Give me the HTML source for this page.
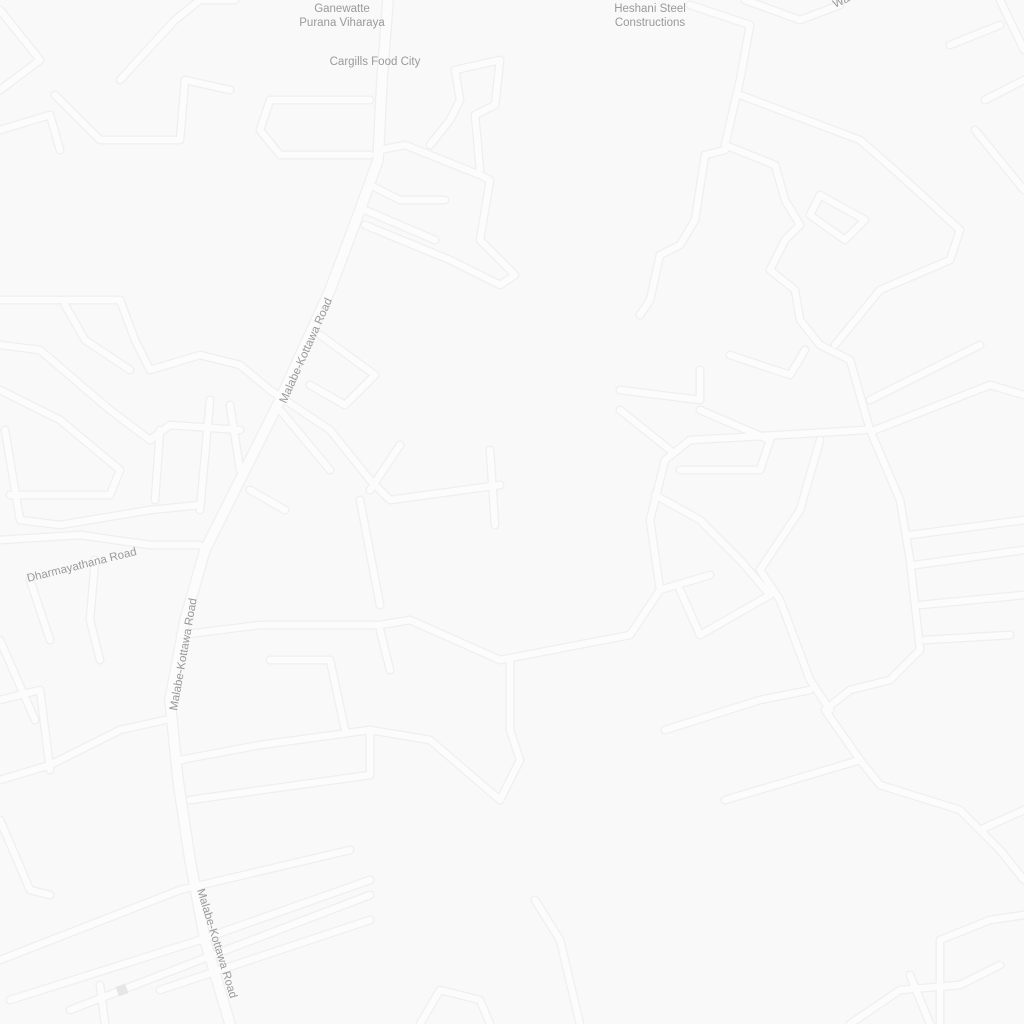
<!DOCTYPE html>
<html><head><style>
html,body{margin:0;padding:0;background:#f9f9f9;width:1024px;height:1024px;overflow:hidden}
svg{display:block}
text{font-family:"Liberation Sans",sans-serif;fill:#9a9a9a;font-size:11.5px}
</style></head><body>
<svg width="1024" height="1024" viewBox="0 0 1024 1024">
<defs>
<g id="r">
<path d="M0 300 L120 300 L135 340 L150 370 L200 355 L240 365 L270 390 L330 430 L370 480 L390 500 L500 485"/>
<path d="M0 345 L40 350 L110 410 L150 440 L170 425 L240 430"/>
<path d="M0 390 L60 420 L120 470 L110 495 L10 495"/>
<path d="M5 430 L20 520 L60 525 L150 510 L200 505"/>
<path d="M0 540 L80 535 L150 545 L200 545"/>
<path d="M30 580 L50 640 M95 560 L90 620 L100 660"/>
<path d="M65 305 L85 340 L130 370"/>
<path d="M160 430 L155 500 M210 400 L200 510 M230 405 L240 470"/>
<path d="M360 500 L380 605 M490 450 L495 525"/>
<path d="M180 635 L260 625 L380 625 L410 620 L500 660 L630 635 L660 590 L650 520 L665 460 L690 440 L780 435 L865 430"/>
<path d="M380 630 L390 670 M510 660 L510 730 L520 760 L500 800"/>
<path d="M180 760 L260 745 L370 730 L430 740 L500 800"/>
<path d="M190 800 L370 775 L370 730"/>
<path d="M270 660 L330 660 L345 730"/>
<path d="M0 780 L50 765 L120 730 L165 720"/>
<path d="M0 700 L40 690 L50 770 M0 640 L35 720"/>
<path d="M0 820 L30 890 L50 895"/>
<path d="M0 960 L180 890 L350 850 M10 1000 L200 940 L370 880 M70 1010 L200 960 L370 895 M160 990 L370 920"/>
<path d="M100 985 L105 1024"/>
<path d="M420 1024 L440 990 L480 1000 L490 1024 M535 900 L560 940 L580 1024"/>
<path d="M745 0 L800 20 L840 5 M690 5 L750 25 L740 80 L725 145 L775 165 L785 200 L800 225 L785 240 L770 270 L795 290 L800 320 L820 345 L850 360 L870 430 L900 500 L910 560 L920 650 L890 680 L850 690 L825 710 L860 760 L880 785 L960 810 L1000 850 L1024 880"/>
<path d="M740 95 L860 140 L900 175 L960 230 L950 260 L880 290 L835 345"/>
<path d="M820 195 L865 220 L845 240 L810 215Z"/>
<path d="M725 150 L705 155 L695 220 L680 245 L660 255 L650 300 L640 315"/>
<path d="M870 400 L980 345 M875 430 L990 385 L1024 395"/>
<path d="M620 390 L700 400 L700 370 M620 410 L670 450 M700 410 L770 440 L760 470 L680 470"/>
<path d="M820 440 L800 510 L760 570 L780 600 L810 680 L830 710 M655 495 L700 520 L740 560 L770 595 L700 635 L680 590 M660 590 L710 575"/>
<path d="M730 355 L790 375 L805 350"/>
<path d="M910 535 L1024 520 M915 565 L1024 550 M920 605 L1024 595 M925 640 L1010 635"/>
<path d="M665 730 L760 700 L810 690 M725 800 L860 760"/>
<path d="M850 1024 L900 990 L960 985 L1000 965 M940 1024 L940 940 L990 920 L1024 915 M980 830 L1024 810 M930 1024 L910 975"/>
<path d="M1000 0 L1024 50 M950 45 L1000 25 M985 100 L1024 80 M975 130 L1024 190"/>
<path d="M0 10 L40 60 L0 90 M0 130 L50 115 L60 150 M55 95 L100 140 L180 140 L185 80 L230 90 M120 80 L175 20 L200 0 M200 0 L235 0"/>
<path d="M370 100 L270 100 L260 130 L280 155 L370 155"/>
<path d="M380 150 L405 145 L480 175 L490 180 L480 240 L515 275 L500 285 L450 260 L365 225 M370 185 L400 200 L445 200 M365 210 L435 240"/>
<path d="M430 145 L450 120 L460 100 L455 70 L500 60 L495 105 L475 115 L480 170"/>
<path d="M280 410 L330 470 M250 490 L285 510 M370 490 L400 445 M320 335 L375 375 L345 405 L310 385"/>
</g>
<path id="m" d="M388 0 L382 80 L378 160 L360 210 L330 290 L280 400 L240 480 L205 550 L185 620 L170 700 L178 780 L190 860 L205 940 L230 1024"/>
</defs>
<rect width="1024" height="1024" fill="#f9f9f9"/>
<g fill="none" stroke-linecap="round" stroke-linejoin="round">
<use href="#r" stroke="#efefef" stroke-width="9"/>
<use href="#m" stroke="#efefef" stroke-width="12"/>
<use href="#r" stroke="#fcfcfc" stroke-width="6.5"/>
<use href="#m" stroke="#fcfcfc" stroke-width="9.5"/>
</g>
<rect x="117" y="985" width="10" height="10" fill="#e6e6e6" transform="rotate(-20 122 990)"/>
<text x="342" y="12" text-anchor="middle">Ganewatte</text>
<text x="342" y="26" text-anchor="middle">Purana Viharaya</text>
<text x="375" y="65" text-anchor="middle">Cargills Food City</text>
<text x="650" y="12" text-anchor="middle">Heshani Steel</text>
<text x="650" y="26" text-anchor="middle">Constructions</text>
<text x="835" y="8" transform="rotate(-25 835 8)">Wa</text>
<text transform="translate(286 404) rotate(-66)" font-size="12.5">Malabe-Kottawa Road</text>
<text transform="translate(177 711) rotate(-80)" font-size="12.5">Malabe-Kottawa Road</text>
<text transform="translate(197 890) rotate(73)" font-size="12.5">Malabe-Kottawa Road</text>
<text transform="translate(28 582) rotate(-14)" font-size="12">Dharmayathana Road</text>
</svg>
</body></html>
